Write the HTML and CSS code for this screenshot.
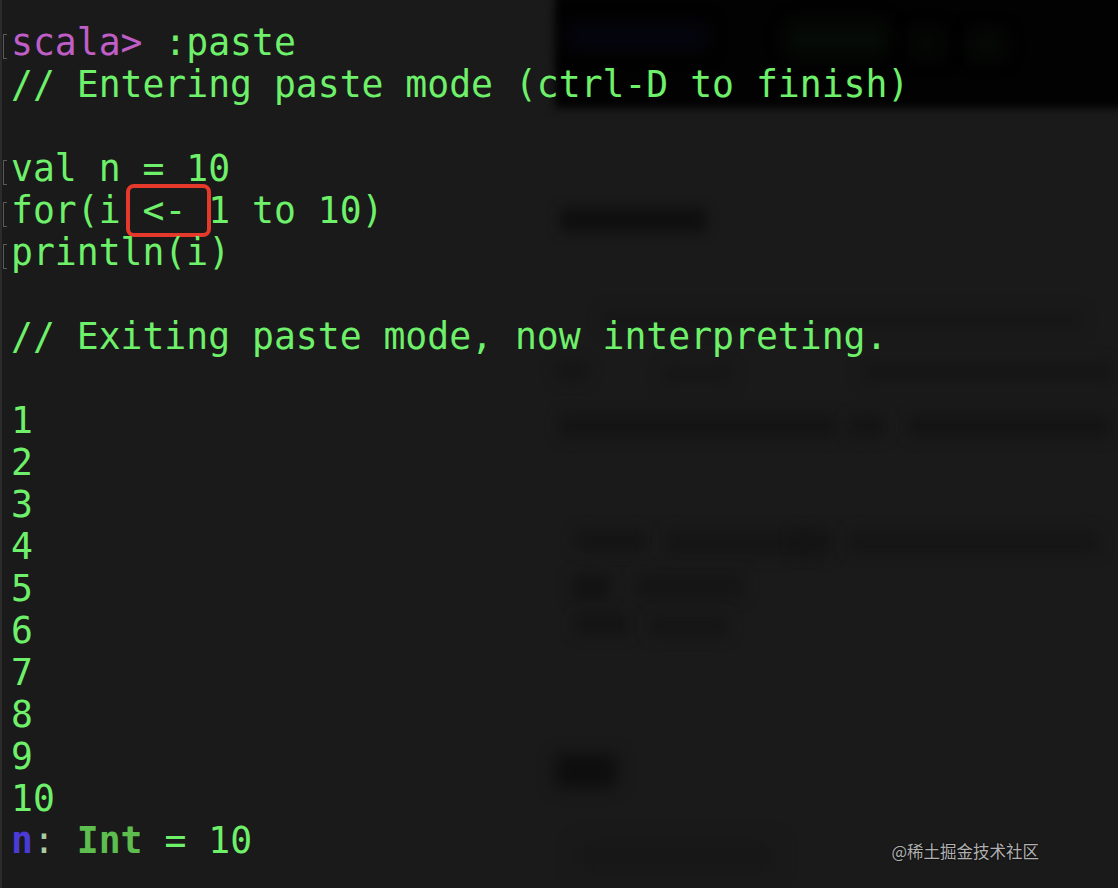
FILE: index.html
```html
<!DOCTYPE html>
<html lang="zh-CN">
<head>
<meta charset="utf-8">
<title>scala paste mode</title>
<link rel="stylesheet" href="styles.css">
</head>
<body>
<div class="screen">
  <div class="ghost" aria-hidden="true">
    <div class="g-panel"></div>
    <div class="g g-blue"></div>
    <div class="g g-green1"></div>
    <div class="g g-green2"></div>
    <div class="g g-green3"></div>
    <div class="g g-h1"></div>
    <div class="g g-r1"></div>
    <div class="g g-r2"></div>
    <div class="g g-r3"></div>
    <div class="g g-r4"></div>
    <div class="g g-r5"></div>
    <div class="g g-r6"></div>
    <div class="g g-r7"></div>
    <div class="g g-r8"></div>
    <div class="g g-r9"></div>
    <div class="g g-r10"></div>
    <div class="g g-r11"></div>
    <div class="g g-r12"></div>
    <div class="g g-r13"></div>
    <div class="g g-r14"></div>
    <div class="g g-r15"></div>
    <div class="g g-h2"></div>
    <div class="g g-r16"></div>
  </div>
  <div class="terminal">
    <div class="line"><span class="gutter"><span class="mark"></span></span><span class="txt"><span class="prompt">scala&gt;</span> :paste</span></div>
    <div class="line"><span class="gutter"></span><span class="txt">// Entering paste mode (ctrl-D to finish)</span></div>
    <div class="line"><span class="gutter"></span><span class="txt"></span></div>
    <div class="line"><span class="gutter"><span class="mark"></span></span><span class="txt">val n = 10</span></div>
    <div class="line hl"><span class="gutter"><span class="mark"></span></span><span class="txt">for(i <span>&lt;-</span> 1 to 10)</span><span class="redbox"></span></div>
    <div class="line"><span class="gutter"><span class="mark"></span></span><span class="txt">println(i)</span></div>
    <div class="line"><span class="gutter"></span><span class="txt"></span></div>
    <div class="line"><span class="gutter"></span><span class="txt">// Exiting paste mode, now interpreting.</span></div>
    <div class="line"><span class="gutter"></span><span class="txt"></span></div>
    <div class="line"><span class="gutter"></span><span class="txt">1</span></div>
    <div class="line"><span class="gutter"></span><span class="txt">2</span></div>
    <div class="line"><span class="gutter"></span><span class="txt">3</span></div>
    <div class="line"><span class="gutter"></span><span class="txt">4</span></div>
    <div class="line"><span class="gutter"></span><span class="txt">5</span></div>
    <div class="line"><span class="gutter"></span><span class="txt">6</span></div>
    <div class="line"><span class="gutter"></span><span class="txt">7</span></div>
    <div class="line"><span class="gutter"></span><span class="txt">8</span></div>
    <div class="line"><span class="gutter"></span><span class="txt">9</span></div>
    <div class="line"><span class="gutter"></span><span class="txt">10</span></div>
    <div class="line"><span class="gutter"></span><span class="txt"><span class="ident">n</span><span class="colon">:</span> <span class="type">Int</span> = 10</span></div>
  </div>
  <div class="watermark">@稀土掘金技术社区</div>
</div>
</body>
</html>
```
FILE: styles.css
```css
html, body {
  margin: 0;
  padding: 0;
  background: #1a1a1a;
}

.screen {
  position: relative;
  width: 1118px;
  height: 888px;
  overflow: hidden;
  background: #1a1a1a;
  border-left: 2px solid #2b2b2b;
  box-sizing: border-box;
}

/* blurred window behind the terminal */
.ghost {
  position: absolute;
  inset: 0;
  pointer-events: none;
}

.g-panel {
  position: absolute;
  left: 553px;
  top: -20px;
  width: 600px;
  height: 128px;
  background: #020202;
  filter: blur(4px);
}

.g {
  position: absolute;
  background: #151515;
  filter: blur(7px);
  border-radius: 4px;
}

.g-blue { left: 565px; top: 24px; width: 140px; height: 26px; background: #05050f; filter: blur(9px); }
.g-green1 { left: 785px; top: 22px; width: 100px; height: 34px; background: #060b06; filter: blur(9px); }
.g-green2 { left: 908px; top: 30px; width: 34px; height: 26px; background: #050805; filter: blur(9px); }
.g-green3 { left: 968px; top: 32px; width: 34px; height: 26px; background: #060a06; filter: blur(9px); }

.g-h1 { left: 558px; top: 208px; width: 146px; height: 24px; background: #0f0f0f; filter: blur(6px); }

.g-r1 { left: 600px; top: 310px; width: 480px; height: 20px; background: #171717; }
.g-r2 { left: 555px; top: 362px; width: 30px; height: 18px; background: #151515; }
.g-r3 { left: 660px; top: 366px; width: 70px; height: 16px; background: #161616; }
.g-r4 { left: 860px; top: 362px; width: 250px; height: 20px; background: #161616; }
.g-r5 { left: 558px; top: 415px; width: 276px; height: 22px; background: #141414; }
.g-r6 { left: 847px; top: 415px; width: 36px; height: 22px; background: #141414; }
.g-r7 { left: 907px; top: 415px; width: 200px; height: 22px; background: #141414; }

.g-r8 { left: 574px; top: 531px; width: 70px; height: 20px; background: #141414; }
.g-r9 { left: 664px; top: 531px; width: 146px; height: 24px; background: #151515; }
.g-r10 { left: 792px; top: 531px; width: 38px; height: 24px; background: #141414; }
.g-r11 { left: 847px; top: 531px; width: 250px; height: 22px; background: #151515; }
.g-r12 { left: 570px; top: 574px; width: 38px; height: 26px; background: #131313; }
.g-r13 { left: 634px; top: 574px; width: 108px; height: 24px; background: #151515; }
.g-r14 { left: 574px; top: 614px; width: 54px; height: 20px; background: #141414; }
.g-r15 { left: 648px; top: 616px; width: 78px; height: 20px; background: #151515; }

.g-h2 { left: 553px; top: 754px; width: 62px; height: 34px; background: #0e0e0e; filter: blur(8px); }
.g-r16 { left: 575px; top: 842px; width: 200px; height: 30px; background: #171717; filter: blur(9px); }

/* terminal text */
.terminal {
  position: relative;
  padding-top: 22px;
  font-family: "DejaVu Sans Mono", "Liberation Mono", monospace;
  font-size: 36.4px;
  color: #6ef06a;
}

.line {
  position: relative;
  display: flex;
  height: 42px;
  line-height: 42px;
  white-space: pre;
}

.gutter {
  flex: 0 0 8px;
  display: flex;
  align-items: flex-start;
  padding-left: 1px;
}

.mark {
  display: block;
  width: 3px;
  height: 23px;
  margin-top: 12px;
  border: 1px solid #5a5a5a;
  border-right: none;
}

.prompt { color: #c05ec8; }
.ident { color: #4a3bd6; font-weight: bold; }
.colon { color: #a9cba3; }
.type { color: #5dbd4f; font-weight: bold; }

.redbox {
  position: absolute;
  left: 124px;
  top: -6px;
  width: 85px;
  height: 53px;
  box-sizing: border-box;
  border: 4.5px solid #e5392b;
  border-radius: 8px;
}

.watermark {
  position: absolute;
  right: 79px;
  bottom: 25px;
  font-family: "Noto Sans CJK SC", "Noto Sans", sans-serif;
  font-size: 16.5px;
  color: #b0b0b0;
  text-shadow: 0 0 2px #000;
}
```
